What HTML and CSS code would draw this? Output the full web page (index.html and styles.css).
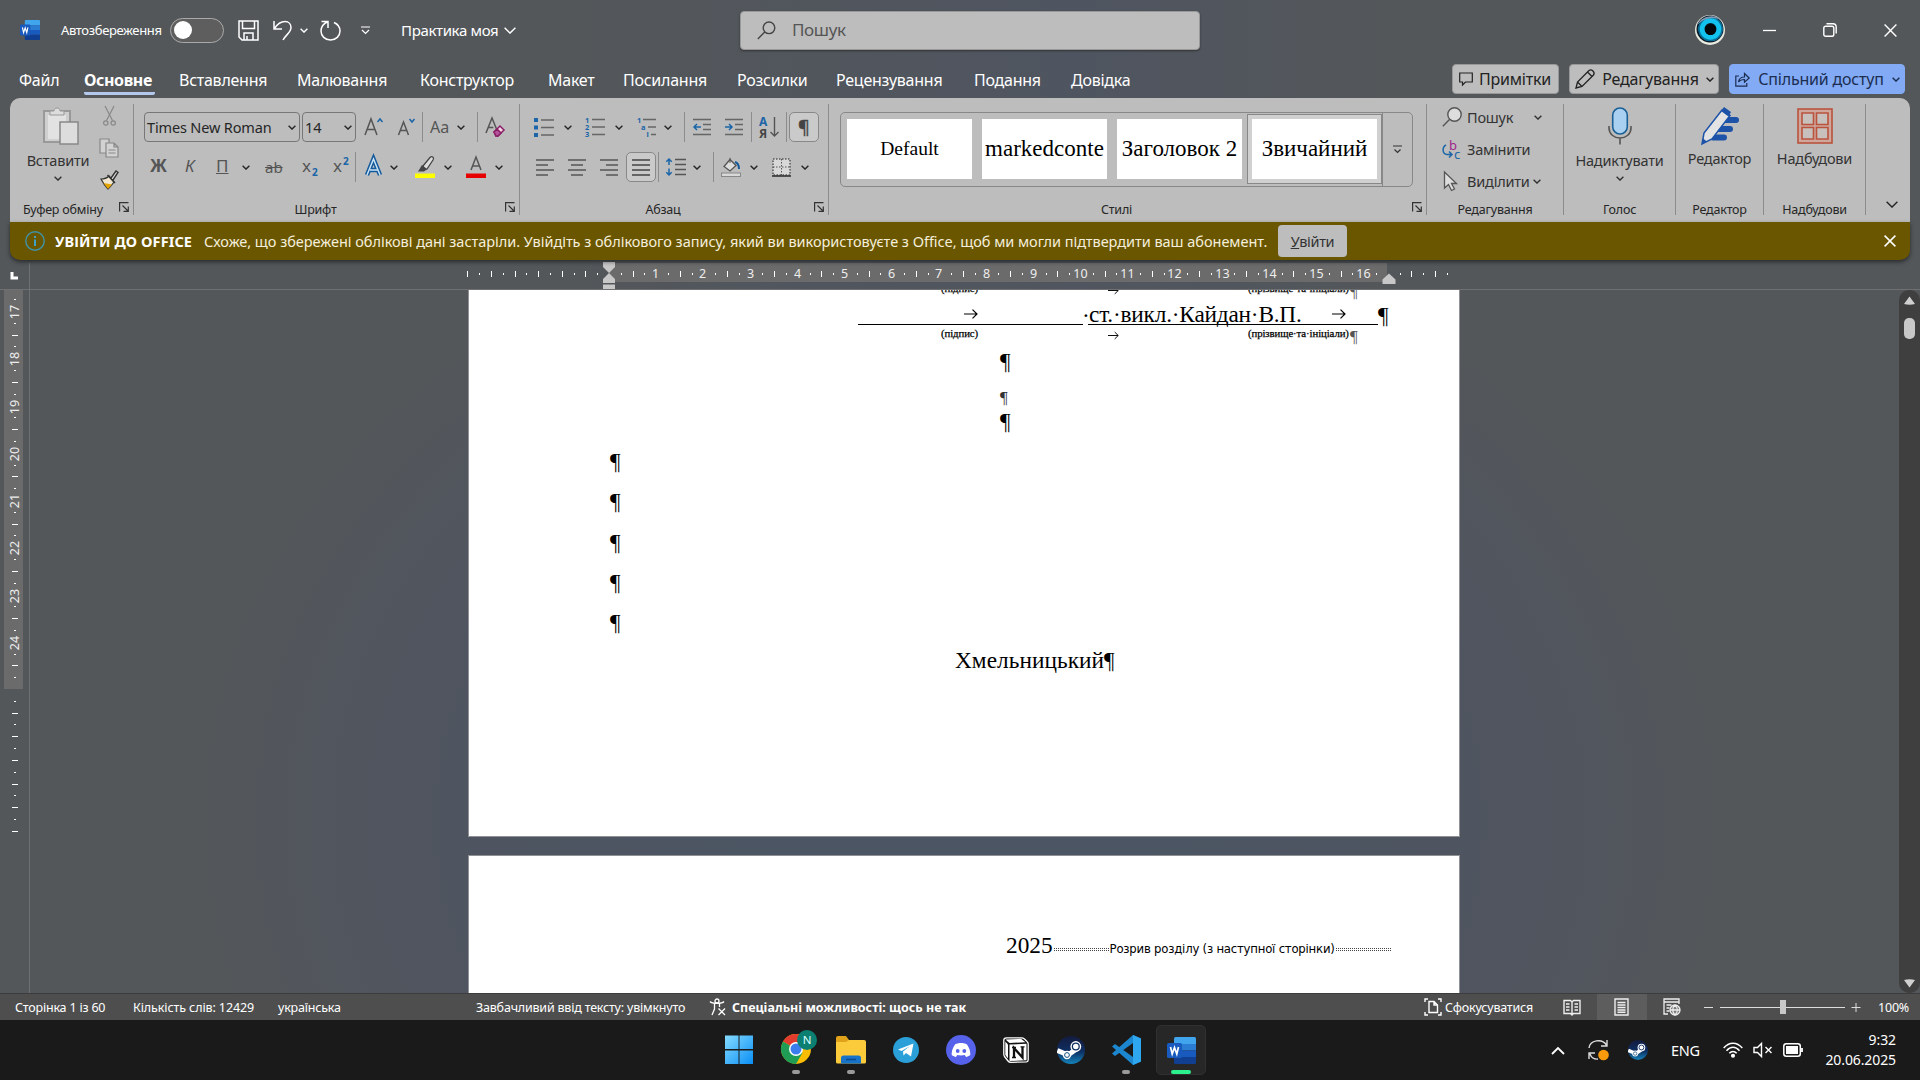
FILE: index.html
```html
<!DOCTYPE html>
<html lang="uk">
<head>
<meta charset="utf-8">
<title>Практика моя - Word</title>
<link rel="stylesheet" href="styles.css">
</head>
<body>
<svg class="defs" aria-hidden="true">
  <symbol id="chev" viewBox="0 0 8 5"><path d="M.6 .8 4 4.1 7.4 .8" fill="none" stroke="currentColor" stroke-width="1.4"/></symbol>
  <symbol id="chevthin" viewBox="0 0 12 7"><path d="M.6 .8 6 6.100 11.400 .8" fill="none" stroke="currentColor" stroke-width="1.4"/></symbol>
  <symbol id="launch" viewBox="0 0 10 10"><path d="M.6 9.5V.6H9.5M3.5 3.5 9 9M9.3 4.5v4.8H4.5" fill="none" stroke="#333" stroke-width="1.2"/></symbol>
  <symbol id="tab" viewBox="0 0 14 10"><path d="M0 5h13M8.5 .6 13 5 8.5 9.4" fill="none" stroke="#000" stroke-width="1.2"/></symbol>
  <symbol id="word" viewBox="0 0 29 27">
    <path d="M7 1.500a1.500 1.500 0 0 1 1.500-1.500h19a1.500 1.500 0 0 1 1.500 1.500V7H7z" fill="#41a5ee"/><path d="M7 7h22v6.500H7z" fill="#2b7cd3"/><path d="M7 13.500h22V20H7z" fill="#185abd"/><path d="M7 20h22v5.500a1.500 1.500 0 0 1-1.500 1.500h-19A1.500 1.500 0 0 1 7 25.500z" fill="#103f91"/>
    <rect y="6" width="15" height="15" rx="1.500" fill="#185abd"/><path d="m3.500 10 1.700 7 2.300-6.500L9.800 17l1.700-7" fill="none" stroke="#fff" stroke-width="1.700"/>
  </symbol>
  <symbol id="steam" viewBox="0 0 28 28">
    <linearGradient id="sg" x2="0" y2="1"><stop offset="0" stop-color="#141b3f"/><stop offset=".55" stop-color="#0e2f62"/><stop offset="1" stop-color="#1484bb"/></linearGradient>
    <circle cx="14" cy="14" r="14" fill="url(#sg)"/><path d="M.3 14.500 11 19l8.500-6" stroke="#fff" stroke-width="5" fill="none"/><circle cx="10" cy="19" r="4.200" fill="#fff"/><circle cx="10" cy="19" r="2.400" fill="none" stroke="#14507f" stroke-width="1"/><circle cx="18.800" cy="10.500" r="5.400" fill="#fff"/><circle cx="18.800" cy="10.500" r="3.400" fill="none" stroke="#12305f" stroke-width="1.300"/>
  </symbol>
</svg>

<div class="window">
  <header class="titlebar">
    <svg width="20" height="20" viewBox="0 0 29 27" preserveAspectRatio="none"><use href="#word" width="29" height="27"/></svg>
    <span class="t-auto">Автозбереження</span>
    <span class="toggle"><i></i></span>
    <svg width="21" height="21" viewBox="0 0 21 21" fill="none" stroke="#fff" stroke-width="1.500"><path d="M1 1h19v19H4l-3-3zM4.500 1v7.500h12V1M6 20v-7h9v7M9 16v4"/></svg>
    <svg width="19" height="21" viewBox="0 0 19 21" fill="none" stroke="#fff" stroke-width="1.500"><path d="M1 1v8h8M1.500 8.500C5 3 9 1.500 12 1.500c4 0 6 3 6 6 0 5-5 7-8 12.500"/></svg>
    <svg class="w" width="8" height="5"><use href="#chev"/></svg>
    <svg width="21" height="21" viewBox="0 0 21 21" fill="none" stroke="#fff" stroke-width="1.500"><path d="M1.500 1.500H8v6.500M7.800 1.700C3.500 3.500 1 7 1 11c0 5 4 9 9.500 9S20 16 20 11c0-4-2.500-7-6-8.500"/></svg>
    <svg width="9" height="9" viewBox="0 0 9 9" fill="none" stroke="#fff" stroke-width="1.200"><path d="M0 1h9M1 4l3.500 3.500L8 4"/></svg>
    <span class="t-doc">Практика моя</span>
    <svg class="w" width="12" height="7"><use href="#chevthin"/></svg>
    <div class="search"><svg width="19" height="19" viewBox="0 0 19 19" fill="none" stroke="#444" stroke-width="1.400"><circle cx="12" cy="6.800" r="5.800"/><path d="M7.800 11 .8 18"/></svg><span>Пошук</span></div>
    <svg width="30" height="30" viewBox="0 0 30 30"><circle cx="15" cy="15" r="15" fill="#e9ebe0"/><circle cx="15" cy="14" r="13.500" fill="#0a1a26"/><circle cx="15.500" cy="14" r="9" fill="none" stroke="#12c3ef" stroke-width="6"/><circle cx="15.500" cy="14" r="11.500" fill="none" stroke="#0a6d96" stroke-width="1.500"/><circle cx="15.500" cy="14.500" r="5.500" fill="#02080c"/><path d="M2 10C6 1 20-2 26 5 18 1 9 3 2 10z" fill="#7f97b0"/></svg>
    <svg width="13" height="13" viewBox="0 0 13 13" stroke="#fff" stroke-width="1.300"><path d="M0 6.500h13"/></svg>
    <svg width="14" height="14" viewBox="0 0 14 14" fill="none" stroke="#fff" stroke-width="1.400"><rect x=".8" y="3.200" width="10" height="10" rx="1.800"/><path d="M3.500 .8H10a3.200 3.200 0 0 1 3.200 3.200v6.500"/></svg>
    <svg width="13" height="13" viewBox="0 0 13 13" stroke="#fff" stroke-width="1.400"><path d="M.6.6l11.800 11.800M12.400.6.6 12.400"/></svg>
  </header>

  <nav class="tabs">
    <span>Файл</span><b>Основне</b><span>Вставлення</span><span>Малювання</span><span>Конструктор</span><span>Макет</span><span>Посилання</span><span>Розсилки</span><span>Рецензування</span><span>Подання</span><span>Довідка</span>
    <button class="btn b-notes"><svg width="14" height="14" viewBox="0 0 14 14" fill="none" stroke="#222" stroke-width="1.200"><path d="M.7 1h12.600v9H6.500L3.500 13v-3H.7z"/></svg>Примітки</button>
    <button class="btn b-edit"><svg width="20" height="20" viewBox="0 0 20 20" fill="none" stroke="#222" stroke-width="1.300"><path d="M1 19l1.500-6L14 1.500c2.500-2 6.500 2 4.500 4.500L7 17.500zM2.500 13 7 17.500M12.500 3l4.500 4.500"/></svg>Редагування<svg width="8" height="5"><use href="#chev"/></svg></button>
    <button class="btn b-share"><svg width="15" height="15" viewBox="0 0 15 15" fill="none" stroke="#1c2e50" stroke-width="1.200"><path d="M4 4H.8v10.200h11V11M3.500 10C4 6.500 6.500 5 9.500 5V1.500L14.200 6 9.500 10.200V7.500C7 7.500 5 8 3.500 10z"/></svg>Спільний доступ<svg width="8" height="5"><use href="#chev"/></svg></button>
  </nav>

  <section class="ribbon">
    <div class="group g-clip">
      <div class="clip-body">
        <div class="big"><svg class="paste" width="36" height="38" viewBox="0 0 36 38"><rect x="1" y="4" width="26" height="31" fill="#cfcfcf" stroke="#999" stroke-width="2"/><rect x="5" y="8" width="18" height="24" fill="#e2e2e2"/><path d="M7 8V4h4c0-4 6-4 6 0h4v4z" fill="#ddd" stroke="#999"/><rect x="17" y="15" width="18" height="22" fill="#ddd" stroke="#888" stroke-width="1.500"/></svg><span>Вставити</span><svg width="8" height="5"><use href="#chev"/></svg></div>
        <div class="clip-side">
          <svg width="13" height="20" viewBox="0 0 13 20" fill="none" stroke="#888" stroke-width="1.200"><path d="M2 0l7.500 14.500M11 0 3.500 14.500"/><circle cx="2.800" cy="17" r="2.200"/><circle cx="10.200" cy="17" r="2.200"/></svg>
          <svg width="20" height="20" viewBox="0 0 20 20" fill="#d2d2d2" stroke="#888" stroke-width="1.200"><path d="M1 1h9v14H1z"/><path d="M7 5h8l4 4v10H7zM15 5v4h4M9.500 12h7M9.500 15h7"/></svg>
          <svg width="20" height="20" viewBox="0 0 20 20"><path d="M2 9c4 0 6-1 8-3l5 6c-2 3-4 5-6 7-3-3-5-6-7-10z" fill="#f1e6cf" stroke="#333" stroke-width="1.200"/><path d="M4.500 13l8.500 1.500L9 19z" fill="#e5a500"/><path d="M12 8l5-7 2 1.500L14 10M8.500 5l7.500 8" stroke="#333" stroke-width="1.400" fill="#ddd"/></svg>
        </div>
      </div>
      <div class="foot"><span>Буфер обміну</span><svg width="10" height="10"><use href="#launch"/></svg></div>
    </div>

    <div class="group g-font">
      <div class="row f1">
        <div class="combo">Times New Roman<svg width="8" height="5"><use href="#chev"/></svg></div>
        <div class="combo c-size">14<svg width="8" height="5"><use href="#chev"/></svg></div>
        <svg width="20" height="22" viewBox="0 0 20 22" fill="none" stroke="#555" stroke-width="1.500"><path d="M1 19 7 3l6 16M3.300 13.500h7.500"/><path d="M13.500 6 16 3l2.500 3" stroke="#1b65a8"/></svg>
        <svg width="20" height="22" viewBox="0 0 20 22" fill="none" stroke="#555" stroke-width="1.500"><path d="M1.500 19 6.500 6l5 13M3.500 14.500h6"/><path d="M12.500 3 15 6l2.500-3" stroke="#1b65a8"/></svg>
        <i class="sep"></i>
        <span class="aa">Aa</span><svg width="8" height="5"><use href="#chev"/></svg>
        <i class="sep"></i>
        <svg width="21" height="22" viewBox="0 0 21 22" fill="none" stroke="#555" stroke-width="1.500"><path d="M1 17 7 2l4.500 11M3.300 11.500h5"/><path d="M9 16l6-6 4 4-6 6H11z" fill="#f3d6e6" stroke="#8a1f66"/><path d="M9 16l3-3 4 4-3 3H11z" fill="#b5529a" stroke="#8a1f66"/></svg>
      </div>
      <div class="row f2">
        <b class="gl">Ж</b><i class="gl">К</i><u class="gl">П</u><svg width="8" height="5"><use href="#chev"/></svg>
        <s class="gl gs">ab</s><span class="gl">x<sub>2</sub></span><span class="gl">x<sup>2</sup></span><i class="sep"></i>
        <svg width="18" height="20" viewBox="0 0 18 20"><path d="M2 18 8.500 2 15 18M5 13h7.500" fill="none" stroke="#14599b" stroke-width="4.500"/><path d="M2 18 8.500 2 15 18M5 13h7.500" fill="none" stroke="#c9e2f4" stroke-width="1.500"/></svg>
        <svg width="8" height="5"><use href="#chev"/></svg>
        <svg width="21" height="22" viewBox="0 0 21 22"><path d="M8 10 15 1.500c2-2 4.500 0 3 2.500L12 13l-3 1z" fill="#ddd" stroke="#444" stroke-width="1.300"/><path d="M7 9l5 4-3 2.500H3z" fill="#444"/><path d="M0 17.500h20V22H0z" fill="#ff0"/></svg>
        <svg width="8" height="5"><use href="#chev"/></svg>
        <svg width="20" height="22" viewBox="0 0 20 22"><path d="M5 14 10 1l5 13M7 10h6" fill="none" stroke="#555" stroke-width="1.500"/><path d="M0 17.500h20V22H0z" fill="#e60000"/></svg>
        <svg width="8" height="5"><use href="#chev"/></svg>
      </div>
      <div class="foot"><span>Шрифт</span><svg width="10" height="10"><use href="#launch"/></svg></div>
    </div>

    <div class="group g-para">
      <div class="row p1">
        <svg width="20" height="19" viewBox="0 0 20 19"><path d="M0 0h4v4H0zM0 7.500h4v4H0zM0 15h4v4H0z" fill="#1b65a8"/><path d="M7 2h13M7 9.500h13M7 17h13" stroke="#666" stroke-width="1.500"/></svg>
        <svg width="8" height="5"><use href="#chev"/></svg>
        <svg width="20" height="20" viewBox="0 0 20 20"><g class="num"><text x="0" y="6">1</text><text x="0" y="13">2</text><text x="0" y="20">3</text></g><path d="M7 2.500h13M7 10h13M7 17.500h13" stroke="#666" stroke-width="1.500"/></svg>
        <svg width="8" height="5"><use href="#chev"/></svg>
        <svg width="20" height="20" viewBox="0 0 20 20"><g class="num"><text x="0" y="6">1</text><text x="4" y="13">a</text><text x="9.500" y="20">i</text></g><path d="M6 2.500h13M11 10h8M14 17.500h5" stroke="#666" stroke-width="1.500"/></svg>
        <svg width="8" height="5"><use href="#chev"/></svg><i class="sep"></i>
        <svg width="18" height="18" viewBox="0 0 18 18" fill="none" stroke="#666" stroke-width="1.500"><path d="M0 1.500h18M10 6.500h8M10 11.500h8M0 16.500h18"/><path d="M8 9H1M4 6 1 9l3 3" stroke="#1b65a8"/></svg>
        <svg width="18" height="18" viewBox="0 0 18 18" fill="none" stroke="#666" stroke-width="1.500"><path d="M0 1.500h18M10 6.500h8M10 11.500h8M0 16.500h18"/><path d="M0 9h7M4 6l3 3-3 3" stroke="#1b65a8"/></svg>
        <i class="sep"></i>
        <svg width="20" height="22" viewBox="0 0 20 22"><text class="az" x="0" y="10" fill="#1b65a8">А</text><text class="az" x="0" y="21.500" fill="#444">Я</text><path d="M15.500 1v19M11.500 16l4 4 4-4" fill="none" stroke="#555" stroke-width="1.400"/></svg>
        <i class="sep"></i><span class="pressed pil">¶</span>
      </div>
      <div class="row p2">
        <svg width="18" height="17" viewBox="0 0 18 17" stroke="#555" stroke-width="1.500"><path d="M0 1h18M0 6h12M0 11h18M0 16h12"/></svg>
        <svg width="18" height="17" viewBox="0 0 18 17" stroke="#555" stroke-width="1.500"><path d="M0 1h18M3 6h12M0 11h18M3 16h12"/></svg>
        <svg width="18" height="17" viewBox="0 0 18 17" stroke="#555" stroke-width="1.500"><path d="M0 1h18M6 6h12M0 11h18M6 16h12"/></svg>
        <span class="pressed"><svg width="18" height="17" viewBox="0 0 18 17" stroke="#444" stroke-width="1.500"><path d="M0 1h18M0 6h18M0 11h18M0 16h18"/></svg></span>
        <i class="sep"></i>
        <svg width="20" height="18" viewBox="0 0 20 18" fill="none" stroke="#555" stroke-width="1.500"><path d="M9 1.500h11M9 6.500h11M9 11.500h11M9 16.500h11"/><path d="M3 1v6M.3 3.700 3 1l2.700 2.700M3 10.500V17M.3 14.300 3 17l2.700-2.700" stroke="#1b65a8"/></svg>
        <svg width="8" height="5"><use href="#chev"/></svg><i class="sep"></i>
        <svg width="20" height="20" viewBox="0 0 20 20"><path d="M3 9.500 9 2.500l6 6-6 5.500z" fill="#ddd" stroke="#555" stroke-width="1.300"/><path d="M9 6V.8" stroke="#555"/><path d="M14 5c3 1 4 3 4 7" fill="none" stroke="#14599b" stroke-width="2"/><rect x=".5" y="16" width="19" height="3.500" fill="#d8d8d8" stroke="#888"/></svg>
        <svg width="8" height="5"><use href="#chev"/></svg>
        <svg width="19" height="19" viewBox="0 0 19 19" fill="none" stroke="#555"><rect x="1" y="1" width="17" height="16" fill="#d8d8d8" stroke-dasharray="1.500 1.500" stroke-width="1.500"/><path d="M9.500 1v16M1 9h17" stroke-dasharray="1.500 1.500"/><path d="M0 18h19" stroke="#333" stroke-width="1.600"/></svg>
        <svg width="8" height="5"><use href="#chev"/></svg>
      </div>
      <div class="foot"><span>Абзац</span><svg width="10" height="10"><use href="#launch"/></svg></div>
    </div>

    <div class="group g-style">
      <div class="gallery">
        <div class="card small"><span>Default</span></div><div class="card"><span>markedconte</span></div><div class="card"><span>Заголовок 2</span></div><div class="card sel"><span>Звичайний</span></div>
        <div class="more"><svg width="9" height="9" viewBox="0 0 9 9" fill="none" stroke="#333" stroke-width="1.200"><path d="M0 1h9M1.500 4.500l3 3 3-3"/></svg></div>
      </div>
      <div class="foot"><span>Стилі</span><svg width="10" height="10"><use href="#launch"/></svg></div>
    </div>

    <div class="group g-find">
      <div class="find-body">
        <svg width="20" height="20" viewBox="0 0 20 20" stroke="#555" stroke-width="1.400"><circle cx="12.500" cy="7.500" r="6.700" fill="#ddd"/><path d="M7.500 12.500.8 19.200"/></svg><span>Пошук</span><svg width="8" height="5"><use href="#chev"/></svg>
        <svg width="19" height="20" viewBox="0 0 19 20"><text class="rb" x="7" y="10.500">b</text><text class="rc" x="12" y="19.500">c</text><path d="M4 6C0 8 0 15 5 15.500h5M7 12.500l3 3-3 3" fill="none" stroke="#1b65a8" stroke-width="1.500"/></svg><span>Замінити</span><i></i>
        <svg width="19" height="20" viewBox="0 0 19 20"><path d="M2.500 1v16l4-3.500 3 6 3-1.500-3-5.500h5z" fill="#ddd" stroke="#555" stroke-width="1.300"/></svg><span>Виділити</span><svg width="8" height="5"><use href="#chev"/></svg>
      </div>
      <div class="foot"><span>Редагування</span></div>
    </div>
    <div class="group g-voice">
      <div class="big"><svg width="24" height="38" viewBox="0 0 24 38"><rect x="4.700" y="1" width="14.600" height="26" rx="7.300" fill="#a9d0f0" stroke="#1a6096" stroke-width="1.600"/><path d="M1 19v2c0 6 5 10 11 10s11-4 11-10v-2M12 31v6.500" fill="none" stroke="#555" stroke-width="1.600"/></svg><span>Надиктувати</span><svg width="8" height="5"><use href="#chev"/></svg></div>
      <div class="foot"><span>Голос</span></div>
    </div>
    <div class="group g-editor">
      <div class="big"><svg width="38" height="38" viewBox="0 0 38 38"><path d="M22 13h13M17 22h12M12 30.500h11" stroke="#1c52a8" stroke-width="6" stroke-linecap="round"/><path d="M1 37l2-11L21 3l8 5.500L11 32z" fill="#e3e3e3" stroke="#1c52a8" stroke-width="1.500"/><path d="M20 4l3-4 7 5-2.500 4.500z" fill="#1c52a8"/><path d="M1 37.500l1-6 4 3z" fill="#1c52a8"/></svg><span class="up">Редактор</span></div>
      <div class="foot"><span>Редактор</span></div>
    </div>
    <div class="group g-add">
      <div class="big"><svg width="36" height="38" viewBox="0 0 36 38" fill="none" stroke="#b9533d" stroke-width="1.600"><rect x="1" y="2" width="34" height="34" fill="#d0a79c"/><path d="M5 6h11.500v11.500H5zM19.500 6H31v11.500H19.500zM5 20.500h11.500V32H5zM19.500 20.500H31V32H19.500z" fill="#c8c0bd"/></svg><span class="up">Надбудови</span></div>
      <div class="foot"><span>Надбудови</span></div>
    </div>
    <svg class="collapse" width="12" height="7"><use href="#chevthin"/></svg>
  </section>

  <section class="notice">
    <svg width="20" height="20" viewBox="0 0 20 20"><circle cx="10" cy="10" r="9.200" fill="none" stroke="#3f92a8" stroke-width="1.400"/><path d="M10 8.500V15M10 5v2" stroke="#3fa0c8" stroke-width="2"/></svg>
    <b>УВІЙТИ ДО OFFICE</b>
    <span>Схоже, що збережені облікові дані застаріли. Увійдіть з облікового запису, який ви використовуєте з Office, щоб ми могли підтвердити ваш абонемент.</span>
    <button class="signin"><u>У</u>війти</button>
    <svg class="nx" width="12" height="12" viewBox="0 0 12 12" stroke="#fff" stroke-width="1.500"><path d="M.6.600l10.800 10.800M11.400.600.600 11.400"/></svg>
  </section>

  <div class="hruler"><svg id="hr" width="1920" height="29"></svg></div>

  <main class="work">
    <aside class="vruler"><svg id="vr" width="29" height="703"></svg></aside>
    <div class="canvas">
      <article class="page first">
        <div class="ln tiny"><span>(підпис)</span><svg width="11" height="9"><use href="#tab"/></svg><span>(прізвище·та·ініціали)</span><em>¶</em></div>
        <div class="ln sign"><div class="ul mid"><svg width="14" height="10"><use href="#tab"/></svg></div><span class="dot">·</span><div class="ul"><span>ст.·викл.·Кайдан·В.П.</span><svg width="14" height="10"><use href="#tab"/></svg></div><em>¶</em></div>
        <div class="ln tiny"><span>(підпис)</span><svg width="11" height="9"><use href="#tab"/></svg><span>(прізвище·та·ініціали)</span><em>¶</em></div>
        <p class="ln c a">¶</p>
        <p class="ln c b"><em>¶</em></p>
        <p class="ln c d">¶</p>
        <div class="left"><p class="ln">¶</p><p class="ln">¶</p><p class="ln">¶</p><p class="ln">¶</p><p class="ln">¶</p></div>
        <p class="ln city">Хмельницький¶</p>
      </article>
      <article class="page second">
        <div class="ln brk"><span>2025</span><i></i><small>Розрив розділу (з наступної сторінки)</small><i></i></div>
      </article>
    </div>
    <div class="scroll"><svg width="13" height="9" viewBox="0 0 13 9"><path d="M1 8 6.500.5 12 8q-5.500 1.500-11 0z" fill="#d0d0d0"/></svg><i></i><svg class="dn" width="13" height="9" viewBox="0 0 13 9"><path d="M1 1 6.500 8.500 12 1Q6.500-.5 1 1z" fill="#d0d0d0"/></svg></div>
  </main>

  <footer class="status">
    <span>Сторінка 1 із 60</span><span class="s-words">Кількість слів: 12429</span><span>українська</span><span class="s-pred">Завбачливий ввід тексту: увімкнуто</span>
    <svg width="18" height="18" viewBox="0 0 18 18" fill="none" stroke="#fff" stroke-width="1.300"><circle cx="8" cy="3" r="2"/><path d="M1 3.500C3 6 13 6 15 3.500M5.500 6v5L3 17M10.500 6v3M9.500 10.500l6.500 6.500M16 10.500 9.500 17"/></svg>
    <b>Спеціальні можливості: щось не так</b>
    <svg width="18" height="18" viewBox="0 0 18 18" fill="none" stroke="#fff" stroke-width="1.400"><path d="M4 1H1v3M14 1h3v3M4 17H1v-3M14 17h3v-3M5 3.500h5l3.500 3.500v7.500H5zM10 3.500V7h3.500"/></svg>
    <span>Сфокусуватися</span>
    <svg width="18" height="17" viewBox="0 0 18 17" fill="none" stroke="#eee" stroke-width="1.400"><path d="M1 1.500h6.500L9 3l1.500-1.500H17v13h-6.500L9 16l-1.500-1.500H1zM9 3v13M3 5h3.500M3 8h3.500M3 11h3.500M11.500 5H15M11.500 8H15M11.500 11H15"/></svg>
    <span class="cur"><svg width="15" height="18" viewBox="0 0 15 18" fill="none" stroke="#eee" stroke-width="1.400"><path d="M1 1h13v16H1zM3.500 4.500h8M3.500 7h8M3.500 9.500h8M3.500 12h8M3.500 14.300h8"/></svg></span>
    <svg width="18" height="18" viewBox="0 0 18 18" fill="none" stroke="#eee" stroke-width="1.300"><path d="M5 16H1V1h15v5M1 4h15M3.500 7h5M3.500 10h3M3.500 13h3"/><circle cx="12" cy="12" r="5" fill="#777"/><path d="M7 12h10M12 7c-3 3-3 7 0 10M12 7c3 3 3 7 0 10"/></svg>
    <svg width="156" height="16" viewBox="0 0 156 16" stroke="#ddd"><path d="M0 8.500h9M16 8.500h125M147.500 8.500h9M152 4v9"/><path d="M76 1h6v14h-6z" fill="#c8c8c8" stroke="none"/></svg>
    <span class="zoomv">100%</span>
  </footer>
</div>

<div class="taskbar">
  <svg width="30" height="30" viewBox="0 0 30 30"><linearGradient id="win" x2="1" y2="1"><stop offset="0" stop-color="#86dcff"/><stop offset="1" stop-color="#0a8ef5"/></linearGradient><path d="M1 .500h13.500V14H1zM15.500.500H29V14H15.500zM1 15.500h13.500V29H1zM15.500 15.500H29V29H15.500z" fill="url(#win)"/></svg>
  <span class="run"><svg class="chrome" width="38" height="36" viewBox="0 0 38 36"><g transform="translate(0 4)"><circle cx="15" cy="15" r="15" fill="#fbbc04"/><path d="M15 15 2 7.500A15 15 0 0 1 28 7.500z" fill="#e33b2e"/><path d="M2 7.500A15 15 0 0 0 15 30l6.500-11.200L15 15z" fill="#1f9d55"/><circle cx="15" cy="15" r="7" fill="#fff"/><circle cx="15" cy="15" r="5.500" fill="#3b7ded"/></g><circle cx="26" cy="10" r="10" fill="#0b8072"/><text class="badge" x="21.800" y="14">N</text></svg></span>
  <span class="run"><svg width="30" height="28" viewBox="0 0 30 28"><path d="M0 2a2 2 0 0 1 2-2h8l3 4h5v5H0z" fill="#e0a21a"/><path d="M0 6h10l3-2h15a2 2 0 0 1 2 2v20a1.500 1.500 0 0 1-1.500 1.500h-27A1.500 1.500 0 0 1 0 26z" fill="#fccb3c"/><path d="M5 27.500V22q0-2.500 2.500-2.500h15q2.500 0 2.500 2.500v5.500z" fill="#1773c8"/><path d="M10 23.500h10" stroke="#0c4a8c" stroke-width="1.500"/></svg></span>
  <svg width="26" height="26" viewBox="0 0 26 26"><circle cx="13" cy="13" r="13" fill="#2a9fd8"/><path d="M5 12.500 20.500 6.500 18 19.500l-5-3.500-2.500 2.500-.5-4 7-5.500-8.500 5z" fill="#fff"/></svg>
  <svg width="30" height="30" viewBox="0 0 30 30"><circle cx="15" cy="15" r="15" fill="#5662ea"/><path d="M9 9.500c3-2 9-2 12 0 2.500 3.500 3.500 7 3.300 10.500-1.500 1.200-3 1.800-4.300 2L18.800 20c-2.500.6-5 .6-7.600 0L10 22c-1.300-.2-2.800-.8-4.300-2C5.500 16.500 6.500 13 9 9.500z" fill="#fff"/><circle cx="11.700" cy="16" r="1.900" fill="#5662ea"/><circle cx="18.300" cy="16" r="1.900" fill="#5662ea"/></svg>
  <svg width="26" height="26" viewBox="0 0 26 26"><path d="M3.500.8 18.500.8Q20 .8 21.500 2L24 4.500Q25.200 5.500 25.200 7v16q0 1.700-1.700 1.800L8 25.300Q6 25.300 5 24L1.500 19.500Q.8 18.500.8 17V3Q.8 1 3.500.8z" fill="#111" stroke="#fff" stroke-width="1.300"/><path d="M2.500 2.500 18 1.800l4.500 3.400L6.500 6z" fill="#fff"/><path d="M6.500 7.500 23.500 6.800v16.500l-17 .7z" fill="#fff"/><path d="M2.300 4.500 5 7.500v14L2.300 18z" fill="#fff"/><path d="M11 20V11l8.500 9.500V10" fill="none" stroke="#111" stroke-width="2.300"/><path d="M9 10.500h4M9 20.500h4M17.500 9.800h4" stroke="#111" stroke-width="1.300"/></svg>
  <svg width="28" height="28"><use href="#steam"/></svg>
  <span class="run"><svg width="30" height="30" viewBox="0 0 30 30"><path d="M22 0l8 3.500v23L22 30 1 11.500 4 9l18 13V8L4 21 1 18.500z" fill="#1c86cf"/><path d="M22 0l8 3.500v23L22 30z" fill="#2fa7f0"/></svg></span>
  <span class="active"><svg width="29" height="27"><use href="#word"/></svg></span>
  <svg width="14" height="9" viewBox="0 0 14 9" fill="none" stroke="#fff" stroke-width="1.800"><path d="M1 8l6-6 6 6"/></svg>
  <svg width="21" height="22" viewBox="0 0 21 22" fill="none" stroke="#ddd" stroke-width="1.400"><path d="M1 9C2 1 14-1 18.500 6M19 1v6h-6M10 20C6 20.500 3 18 2 15M1 20v-6h6"/><circle cx="15.500" cy="16" r="5.300" fill="#f99a0c" stroke="none"/></svg>
  <svg width="20" height="20"><use href="#steam"/></svg>
  <span class="lang">ENG</span>
  <svg width="20" height="16" viewBox="0 0 20 16" fill="none" stroke="#fff" stroke-width="1.500"><path d="M.7 6C6-.5 14-.5 19.300 6M3.500 8.700c4-4.500 9-4.500 13 0M6.300 11.300c2.200-2.500 5.200-2.500 7.400 0"/><circle cx="10" cy="13.800" r="1.300" fill="#fff"/></svg>
  <svg width="20" height="16" viewBox="0 0 20 16" fill="none" stroke="#fff" stroke-width="1.400"><path d="M1 5.500h3.500l4-4v13l-4-4H1zM12.500 5l6 6M18.500 5l-6 6"/></svg>
  <svg width="20" height="14" viewBox="0 0 20 14"><rect x=".8" y=".8" width="16.500" height="12.400" rx="2.500" fill="none" stroke="#fff" stroke-width="1.500"/><rect x="3" y="3" width="12" height="8" fill="#fff"/><path d="M19 5v4" stroke="#fff" stroke-width="1.800"/></svg>
  <div class="clock"><span>9:32</span><span>20.06.2025</span></div>
</div>
<script src="rulers.js"></script>
</body>
</html>
```
FILE: styles.css
```css
* { box-sizing: border-box; }
body { margin: 0; width: 1920px; height: 1080px; overflow: hidden; font-family: "Noto Sans", "Open Sans", sans-serif; font-size: 14px; color: #262626; background: #1a1a1a; }
svg { display: block; flex: none; overflow: visible; }
span, b { white-space: nowrap; }
button { font-family: inherit; border: 0; padding: 0; }
.defs { width: 0; height: 0; position: absolute; }
.w { color: #fff; }
.window { height: 1020px; display: flex; flex-direction: column; background: radial-gradient(ellipse 760px 620px at 960px 820px, #4b5564 0, #4d5561 55%, #51555e 80%, rgba(83,87,90,0) 100%), linear-gradient(90deg, #53575a 30%, #4f5560 56%, #53575a 72%); }

.titlebar { height: 60px; display: grid; align-items: center; padding-left: 20px; grid-template-columns: 41px 109px 68px 35px 27px 20px 41px 40px 103px 236px 955px 68px 60px 61px 20px; color: #fff; }
.t-auto { font-size: 13px; letter-spacing: -.35px; }
.t-doc { font-size: 15px; letter-spacing: -.35px; }
.toggle { width: 54px; height: 25px; border: 1px solid #aaa; border-radius: 13px; background: #5e5e5e; display: flex; align-items: center; padding-left: 3px; }
.toggle i { width: 18px; height: 18px; border-radius: 50%; background: #fff; }
.search { width: 460px; height: 39px; background: #bdbdbd; border: 1px solid #999; border-radius: 4px; box-shadow: 0 1px 2px #333; display: flex; align-items: center; padding-left: 16px; gap: 16px; font-size: 17px; line-height: 35px; letter-spacing: -.35px; color: #555; }
.search span { margin-top: -2px; }

.tabs { height: 38px; padding-left: 19px; display: grid; grid-template-columns: 65px 95px 118px 123px 128px 75px 114px 99px 138px 97px 381px 117px 160px 177px; color: #fff; font-size: 16px; line-height: 40px; letter-spacing: -.25px; }
.tabs b { width: 71px; height: 35px; border-bottom: 3px solid #b4c7ec; border-radius: 2px; letter-spacing: -.4px; }
.btn { height: 30px; margin-top: 4px; display: flex; align-items: center; border-radius: 4px; background: #bdbdbd; border: 1px solid #999; color: #222; font-size: 16px; letter-spacing: -.2px; line-height: 28px; white-space: nowrap; justify-content: space-between; }
.b-notes { width: 107px; padding: 0 7px 0 6px; }
.b-edit { width: 150px; padding: 0 4px 0 5px; }
.b-share { width: 176px; padding: 0 4px 0 5px; background: #82aaf5; border-color: #82aaf5; color: #1c2e50; }

.ribbon { width: 1900px; height: 124px; margin-left: 10px; background: #bdbdbd; border-radius: 10px 10px 0 0; display: flex; padding-top: 6px; }
.group { height: 111px; border-right: 1px solid #8c8c8c; display: flex; flex-direction: column; justify-content: space-between; }
.g-clip { width: 124px; } .g-font { width: 386px; } .g-para { width: 309px; } .g-style { width: 598px; } .g-find { width: 137px; } .g-voice { width: 112px; } .g-editor { width: 88px; } .g-add { width: 102px; }
.foot { display: flex; align-items: center; justify-content: center; height: 16px; font-size: 12.5px; letter-spacing: -.2px; line-height: 16px; margin-top: auto; }
.foot svg { margin-right: 4px; }
.foot span { margin: 5px auto 0; }
.foot span:not(:only-child) { padding-right: 8px; }
.g-clip .foot span { margin-left: 13px; padding: 0; }
.row { display: grid; align-items: center; height: 30px; margin-top: 8px; }
.row + .row { margin-top: 10px; }
.f1 { padding-left: 10px; grid-template-columns: 158px 62px 33px 25px 8px 27px 20px 8px 21px; }
.f2 { padding-left: 16px; grid-template-columns: 35px 31px 26px 23px 37px 31px 22px 10px 25px 25px 29px 22px 29px 8px; }
.p1 { padding-left: 14px; grid-template-columns: 30px 21px 30px 22px 27px 20px 9px 32px 26px 8px 27px 3px 30px; }
.p2 { padding-left: 16px; grid-template-columns: 32px 32px 26px 32px 8px 27px 20px 8px 29px 22px 29px 8px; }
.sep { width: 1px; height: 30px; background: #8c8c8c; }
.combo { width: 156px; height: 30px; border: 1px solid #777; border-radius: 4px; display: flex; align-items: center; justify-content: space-between; padding: 0 3px 0 2px; font-size: 14.5px; letter-spacing: -.15px; white-space: nowrap; }
.c-size { width: 54px; }
.aa { font-size: 16px; color: #555; }
.gl { font-size: 17px; line-height: 28px; margin-top: -2px; color: #555; }
i.gl { font-style: italic; }
.gs { font-size: 15px; margin-top: 0; }
.gl sub, .gl sup { font-size: 10px; line-height: 0; color: #1b65a8; font-weight: bold; margin-left: 1px; }
.num text { font: bold 7.5px "Noto Sans", sans-serif; fill: #1b65a8; }
.az { font: bold 12px "Noto Sans", sans-serif; }
.rb { font: 13px "Noto Sans", sans-serif; fill: #a0278a; }
.rc { font: 13px "Noto Sans", sans-serif; fill: #1b65a8; }
.pressed { width: 30px; height: 30px; border: 1px solid #888; border-radius: 5px; background: #cacaca; display: flex; align-items: center; justify-content: center; }
.pil { font-size: 18px; color: #444; -webkit-text-stroke: .4px #444; }

.clip-body { display: flex; }
.big { display: flex; flex-direction: column; align-items: center; padding-top: 3px; font-size: 14.5px; line-height: 20px; letter-spacing: -.2px; color: #333; }
.big span { margin: 5px 0 6px; }
.big .up { margin-top: 3px; }
.big .paste { margin-left: 6px; }
.g-clip .big { width: 70px; margin-left: 13px; }
.clip-side { display: flex; flex-direction: column; gap: 12px; align-items: center; padding-top: 2px; margin-left: 6px; }
.gallery { width: 573px; height: 75px; margin: 8px 0 0 11px; border: 1px solid #888; border-radius: 5px; display: flex; }
.card { width: 135px; height: 70px; margin-top: 1px; padding: 5px; display: flex; }
.card:first-child { margin-left: 1px; }
.card.sel { border: 1px solid #888; background: #d0d0d0; padding: 4px; }
.card span { flex: 1; background: #fff; color: #000; font: 23px/60px "Liberation Serif", serif; text-align: center; overflow: hidden; letter-spacing: 0; }
.card.small span { font-size: 19.5px; }
.more { flex: 1; border-left: 1px solid #888; display: flex; align-items: center; justify-content: center; }
.find-body { display: grid; grid-template-columns: 25px 67px 10px; grid-auto-rows: 32px; align-items: center; margin-left: 15px; margin-top: -3px; font-size: 14.5px; letter-spacing: -.2px; color: #333; }
.find-body svg:last-child { margin-left: -1px; }
.collapse { margin: 97px 0 0 20px; }

.notice { width: 1900px; height: 38px; margin-left: 10px; background: #6b5600; border-radius: 0 0 10px 10px; box-shadow: 0 2px 4px rgba(0,0,0,.5); display: grid; align-items: center; grid-template-columns: 30px 149px 1074px 606px 12px; padding-left: 15px; color: #f4efdc; font-size: 14.5px; letter-spacing: -.03px; flex: none; z-index: 1; }
.notice b { color: #fff; font-size: 14.5px; letter-spacing: .1px; }
.signin { width: 69px; height: 32px; border-radius: 4px; background: #bdbdbd; color: #333; font-size: 14.5px; letter-spacing: -.3px; }

.hruler { height: 30px; border-bottom: 1px solid #6e7072; flex: none; }
.work { height: 703px; display: flex; }
.vruler { width: 30px; border-right: 1px solid #6e7072; }
.rt { font: 12.5px "Noto Sans", sans-serif; fill: #eee; text-anchor: middle; }
.canvas { width: 1869px; padding-left: 438px; overflow: hidden; }
.page { width: 992px; background: #fff; border: 1px solid #8f9194; overflow: hidden; }
.first { height: 547px; border-top: 0; padding-top: 1px; }
.second { height: 140px; margin-top: 18px; }
.ln { margin: 0; font: 23.3px/25px "Liberation Serif", "Times New Roman", serif; color: #000; }
.ln em { font-style: normal; }
.ln span { white-space: pre; }
.tiny { height: 20px; padding-left: 472px; display: grid; grid-template-columns: 167px 140px 102px 10px; font-size: 10.8px; line-height: 16px; letter-spacing: -.1px; -webkit-text-stroke: .25px #000; }
.tiny svg { margin-top: 6px; }
.tiny em, .b em { font-size: 17px; line-height: 24px; color: #555; -webkit-text-stroke: 0; }
.first .tiny:first-child { margin-top: -11px; }
.sign { display: grid; grid-template-columns: 225px 5px 290px 12px; padding-left: 389px; height: 25px; line-height: 28px; }
.ul { height: 25px; border-bottom: 1px solid #000; display: flex; align-items: center; justify-content: space-between; padding-right: 32px; padding-left: 1px; }
.ul span { margin-top: 3px; letter-spacing: -.2px; }
.ul svg { margin-top: 3px; }
.ul.mid { justify-content: center; padding: 0; }
.dot { margin-left: -1px; margin-top: 1px; }
.sign em { margin-top: 1px; }
.c { padding-left: 531px; }
.a { height: 33px; padding-top: 4px; }
.b { height: 32px; padding-top: 5px; color: #444; }
.b em { color: #333; }
.d { height: 31px; margin-top: -1px; }
.left { padding-left: 141px; }
.left .ln { height: 40.3px; padding-top: 9px; }
.city { padding: 7px 0 0 486px; letter-spacing: .05px; }
.brk { padding: 77px 0 0 537px; display: flex; align-items: flex-end; }
.brk i { width: 55px; height: 3px; margin: 0 1px 7px 1px; border-top: 1px dotted #444; border-bottom: 1px dotted #444; }
.brk small { font: 13px/18px "DejaVu Sans Condensed", "DejaVu Sans", sans-serif; width: 225px; white-space: nowrap; letter-spacing: -.22px; }
.scroll { width: 21px; background: #3f3f3f; border-radius: 10px; display: flex; flex-direction: column; align-items: center; padding: 6px 1px 5px 0; }
.scroll i { width: 11px; height: 21px; border-radius: 5px; background: #c8c8c8; margin-top: 13px; }
.scroll .dn { margin-top: auto; }

.status { height: 27px; flex: none; background: #4e4e4e; border-top: 1px solid #3c3c3c; display: grid; align-items: center; padding-left: 15px; color: #fff; font-size: 12.5px; letter-spacing: -.2px; grid-template-columns: 118px 145px 198px 233px 23px 692px 21px 118px 34px 66px 41px 174px 40px; }
.status b { letter-spacing: 0; }
.status .s-words { letter-spacing: -.1px; }
.cur { width: 50px; height: 26px; background: #5d5d5d; display: flex; align-items: center; justify-content: center; padding-right: 2px; }
.zoomv { font-size: 12.5px; }

.taskbar { height: 60px; background: #1a1a1a; display: grid; align-items: center; padding-left: 724px; grid-template-columns: 57px 55px 57px 53px 57px 54px 54px 45px 395px 37px 40px 43px 52px 30px 30px 22px 91px; color: #fff; font-size: 14.5px; letter-spacing: -.3px; }
.run, .active { height: 50px; display: flex; align-items: center; position: relative; }
.run { width: 30px; }
.chrome { margin-bottom: 4px; }
.run::after { content: ""; position: absolute; left: 11px; bottom: 1px; width: 8px; height: 4px; border-radius: 2px; background: #9a9a9a; }
.active { width: 50px; border-radius: 5px; background: #272727; border: 1px solid #303030; justify-content: center; }
.active::after { content: ""; position: absolute; left: 14px; bottom: 0; width: 20px; height: 4px; border-radius: 2px; background: #2bf28c; }
.badge { font: 11.5px "Noto Sans", sans-serif; fill: #dff; letter-spacing: 0; }
.clock { display: flex; flex-direction: column; align-items: flex-end; line-height: 20px; font-size: 14px; letter-spacing: -.1px; }
```
FILE: rulers.js
```js
const NS = 'http://www.w3.org/2000/svg';
const add = (svg, name, attrs, text) => {
  const e = document.createElementNS(NS, name);
  for (const k in attrs) e.setAttribute(k, attrs[k]);
  if (text) e.textContent = text;
  svg.appendChild(e);
};
const CM = 47.2;

// horizontal ruler: zero at the left margin, 16.5 cm of text width
const h = document.getElementById('hr');
add(h, 'rect', { x: 609, y: 3, width: 778, height: 19, fill: '#6b6b6b' });
for (let q = -12; q <= 71; q++) {
  const x = Math.round(609 + q * CM / 4);
  if (q === 0 || q === 66) continue;
  if (q > 0 && q < 66 && q % 4 === 0) {
    add(h, 'text', { x: x - .5, y: 18, class: 'rt' }, String(q / 4));
  } else if (q % 2) {
    add(h, 'rect', { x, y: 13, width: 1, height: 2, fill: '#fff' });
  } else {
    add(h, 'rect', { x, y: 11, width: 1, height: 6, fill: '#fff' });
  }
}
add(h, 'path', { d: 'M603 2h12v5l-6 6-6-6z', fill: '#c8c8c8' });
add(h, 'path', { d: 'M603 23v-4l6-6 6 6v4zM603 24.500h12V29h-12z', fill: '#c8c8c8' });
add(h, 'path', { d: 'M1382.500 24v-4.500l6.500-6 6.500 6V24z', fill: '#c8c8c8' });
add(h, 'path', { d: 'M12 12v6h6', fill: 'none', stroke: '#fff', 'stroke-width': 3 });
add(h, 'rect', { x: 29, y: 3, width: 1, height: 26, fill: '#6e7072' });

// vertical ruler: the page body ends shortly after mark 24
const v = document.getElementById('vr');
add(v, 'rect', { x: 4, y: 0, width: 19, height: 399, fill: '#6b6b6b' });
for (let q = -3; q <= 44; q++) {
  const y = Math.round(22 + q * 47.25 / 4);
  if (y < 5 || q === 32) continue;
  if (q % 4 === 0 && q < 32) {
    add(v, 'text', { x: 0, y: 0, class: 'rt', transform: `translate(19 ${y}) rotate(-90)` }, String(17 + q / 4));
  } else if (q % 2) {
    add(v, 'rect', { x: 14, y: y - 1, width: 2, height: 1, fill: '#fff' });
  } else {
    add(v, 'rect', { x: 12, y: y - 1, width: 6, height: 1, fill: '#fff' });
  }
}
```
